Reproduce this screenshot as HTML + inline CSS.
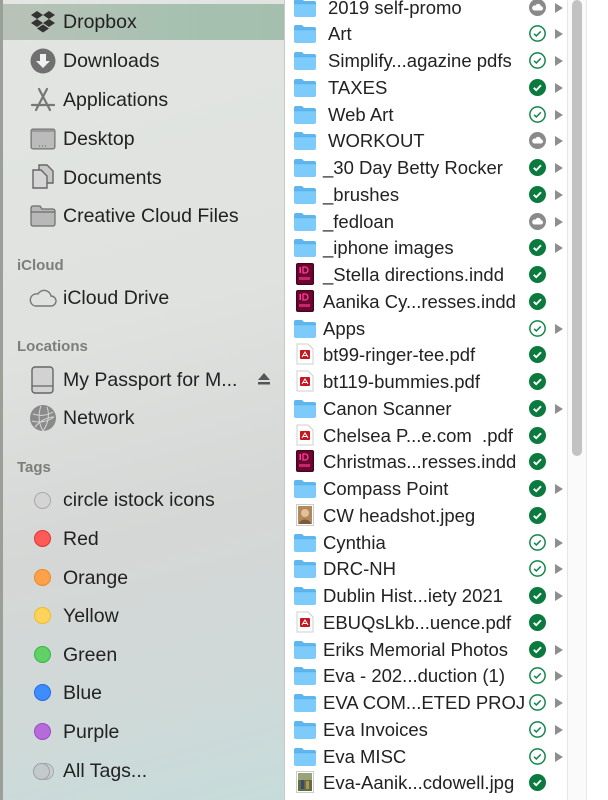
<!DOCTYPE html>
<html><head><meta charset="utf-8">
<style>
*{margin:0;padding:0;box-sizing:border-box}
body{width:608px;height:800px;overflow:hidden;font-family:"Liberation Sans",sans-serif;background:#fff;position:relative}
#side{position:absolute;left:0;top:0;width:285px;height:800px;background:linear-gradient(165deg,#e2e5e2 0%,#dfe2df 40%,#d5d7d6 65%,#cfd9d8 85%,#c6dcdb 100%);border-right:1px solid #c8c8c8}
#strip{position:absolute;left:0;top:0;width:3px;height:800px;background:#9a9f98}
#sel{position:absolute;left:3px;top:4px;width:281px;height:36px;background:linear-gradient(90deg,#b9c2b8,#a7c1b1 60%,#a5bfae)}
.si{position:absolute;left:63px;font-size:19.5px;color:#222;line-height:22px}
.sh{position:absolute;left:17px;font-size:15px;color:#7b7e7b;font-weight:bold}
.ic{position:absolute}
.dot{position:absolute;left:34px;width:17px;height:17px;border-radius:50%}
#main{position:absolute;left:286px;top:0;width:281px;height:800px;background:#fff}
.r{position:absolute;left:286px;width:281px;height:27px}
.t{position:absolute;left:37px;top:3px;font-size:18.5px;color:#222;white-space:nowrap;line-height:21px}
.w .t{left:42px}
.r svg{position:absolute}
.f{left:7px;top:4px}
.o{left:10px;top:2px}
.s{left:243px;top:5px}
.a{left:268px;top:8px}
#sb{position:absolute;left:567px;top:0;width:20px;height:800px;background:#fafafa;border-left:1px solid #e6e6e6;border-right:1px solid #e6e6e6}
#thumb{position:absolute;left:572px;top:0;width:10px;height:456px;border-radius:5px;background:#c2c2c2}
</style></head><body>
<svg width="0" height="0" style="position:absolute">
<defs>
<symbol id="fold" viewBox="0 0 24 20"><path d="M1 3a2 2 0 0 1 2-2h6l2 2h10a2 2 0 0 1 2 2v1H1z" fill="#5fb6ee"/><rect x="1" y="5" width="22" height="14" rx="2" fill="#7ccbfb"/><rect x="1" y="5" width="22" height="1.2" fill="#5ab2ea"/></symbol>
<symbol id="chkf" viewBox="0 0 16 16"><circle cx="8" cy="8" r="8" fill="#0a7a3e"/><path d="M4.5 8.3l2.3 2.2 4.5-4.6" stroke="#fff" stroke-width="1.8" fill="none"/></symbol>
<symbol id="chko" viewBox="0 0 16 16"><circle cx="8" cy="8" r="7.2" fill="none" stroke="#13864a" stroke-width="1.4"/><path d="M4.8 8.3l2.1 2 4.2-4.3" stroke="#13864a" stroke-width="1.4" fill="none"/></symbol>
<symbol id="cld" viewBox="0 0 16 16"><circle cx="8" cy="8" r="8" fill="#8a8a8a"/><path d="M4.6 10.8h6.6a2 2 0 0 0 0-4 2.6 2.6 0 0 0-5-.6 2.3 2.3 0 0 0-1.6 4.6z" fill="#fff"/></symbol>
<symbol id="arr" viewBox="0 0 10 12"><path d="M1 1l8 5-8 5z" fill="#8e8e8e"/></symbol>
<symbol id="id" viewBox="0 0 18 22"><rect width="18" height="22" rx="2" fill="#49021f"/><rect x="1.3" y="1.3" width="15.4" height="19.4" rx="1" fill="#6b0730"/><rect x="3.5" y="4" width="1.5" height="6" fill="#ff3f93"/><path d="M7 4h2a3 3 0 0 1 0 6H7z" fill="none" stroke="#ff3f93" stroke-width="1.3"/><rect x="3" y="14" width="11" height="3" fill="#ff3f93" opacity=".6"/></symbol>
<symbol id="pdf" viewBox="0 0 18 22"><path d="M1 1h11l5 5v15H1z" fill="#fff" stroke="#cfcfcf"/><rect x="4" y="7" width="10" height="9" rx="1" fill="#c6171e"/><path d="M6 14l3-5 3 5M7 12.5h4" stroke="#fff" stroke-width="1" fill="none"/></symbol>
<symbol id="img" viewBox="0 0 18 22"><rect x=".5" y=".5" width="17" height="21" fill="#fff" stroke="#ccc"/><rect x="2" y="2" width="14" height="18" fill="#b08a5a"/><circle cx="9" cy="9" r="4" fill="#e4c09b"/><path d="M3 20c1-6 11-6 12 0z" fill="#7a5a3a"/></symbol>
<symbol id="img2" viewBox="0 0 18 22"><rect x=".5" y=".5" width="17" height="21" fill="#fff" stroke="#ccc"/><rect x="2" y="2" width="14" height="18" fill="#5f7040"/><rect x="2" y="2" width="14" height="7" fill="#9aa27a"/><rect x="5" y="9" width="3" height="9" fill="#3a4a6a"/><rect x="10" y="10" width="3" height="8" fill="#c0905a"/></symbol>
</defs></svg>

<div id="side">
<div id="strip"></div>
<div id="sel"></div>
<svg class="ic" style="left:30px;top:10px" width="26" height="24" viewBox="0 0 26 24"><path d="M7 1l6 4-6 4-6-4zM19 1l6 4-6 4-6-4zM1 13l6-4 6 4-6 4zM25 13l-6-4-6 4 6 4zM7 18.5l6-4 6 4-6 4z" fill="#333"/></svg>
<div class="si" style="top:11px">Dropbox</div>
<svg class="ic" style="left:30px;top:48px" width="26" height="26" viewBox="0 0 26 26"><circle cx="13" cy="13" r="12.5" fill="#707070"/><path d="M10 6h6v7h4l-7 7-7-7h4z" fill="#f0f0f0"/></svg>
<div class="si" style="top:50px">Downloads</div>
<svg class="ic" style="left:30px;top:87px" width="26" height="26" viewBox="0 0 26 26"><path d="M9 2l11 21M17 2L6 23M2 18h22" stroke="#777" stroke-width="2.2" fill="none" stroke-linecap="round"/></svg>
<div class="si" style="top:89px">Applications</div>
<svg class="ic" style="left:30px;top:128px" width="26" height="22" viewBox="0 0 26 22"><rect x="1" y="1" width="24" height="20" rx="2" fill="#9a9a9a" stroke="#6f6f6f"/><rect x="2" y="4" width="22" height="16" fill="#bbb"/><path d="M9 18h1M12 18h1M15 18h1" stroke="#666"/></svg>
<div class="si" style="top:128px">Desktop</div>
<svg class="ic" style="left:31px;top:164px" width="24" height="26" viewBox="0 0 24 26"><path d="M8 1h8l6 6v12H8z" fill="#c8c8c8" stroke="#666" stroke-width="1.4"/><path d="M2 6h8l6 6v12H2z" fill="#d6d6d6" stroke="#666" stroke-width="1.4"/></svg>
<div class="si" style="top:167px">Documents</div>
<svg class="ic" style="left:30px;top:205px" width="26" height="22" viewBox="0 0 26 22"><path d="M1 3a2 2 0 0 1 2-2h7l2 3h11a2 2 0 0 1 2 2v13a2 2 0 0 1-2 2H3a2 2 0 0 1-2-2z" fill="#b8b8b8" stroke="#6b6b6b" stroke-width="1.2"/><path d="M1 7h24" stroke="#6b6b6b" stroke-width="1.2"/></svg>
<div class="si" style="top:205px">Creative Cloud Files</div>
<div class="sh" style="top:257px">iCloud</div>
<svg class="ic" style="left:29px;top:288px" width="28" height="20" viewBox="0 0 28 20"><path d="M6 18h16a5 5 0 0 0 0-10 7 7 0 0 0-13-2A6 6 0 0 0 6 18z" fill="none" stroke="#777" stroke-width="1.4"/></svg>
<div class="si" style="top:287px">iCloud Drive</div>
<div class="sh" style="top:338px">Locations</div>
<svg class="ic" style="left:31px;top:366px" width="24" height="28" viewBox="0 0 24 28"><rect x="1" y="1" width="21" height="26" rx="3" fill="#d2d2d2" stroke="#666" stroke-width="1.4"/><path d="M1 20h21" stroke="#666" stroke-width="1.2"/></svg>
<div class="si" style="top:369px">My Passport for M...</div>
<svg class="ic" style="left:257px;top:372px" width="14" height="14" viewBox="0 0 14 14"><path d="M7 1l6 7H1z" fill="#555"/><rect x="1" y="10" width="12" height="2.5" fill="#555"/></svg>
<svg class="ic" style="left:29px;top:404px" width="28" height="28" viewBox="0 0 28 28"><circle cx="14" cy="14" r="13" fill="#8a8a8a"/><path d="M4 10c6 2 14 2 20-2M3 17c7 2 15 1 22-4M12 2c-3 8-3 16 2 25M18 3c3 8 1 17-4 24M6 23c5-6 12-10 19-10" stroke="#d6d6d6" stroke-width="1" fill="none"/></svg>
<div class="si" style="top:407px">Network</div>
<div class="sh" style="top:459px">Tags</div>
<div class="dot" style="top:492px;background:#d4d4d4;border:1px solid #a8a8a8"></div>
<div class="si" style="top:489px">circle istock icons</div>
<div class="dot" style="top:530px;background:#ff5a57;border:1px solid #e0332f"></div>
<div class="si" style="top:528px">Red</div>
<div class="dot" style="top:569px;background:#ffa04a;border:1px solid #ec8a1a"></div>
<div class="si" style="top:567px">Orange</div>
<div class="dot" style="top:607px;background:#fdd35b;border:1px solid #f2bb1e"></div>
<div class="si" style="top:605px">Yellow</div>
<div class="dot" style="top:646px;background:#5fd167;border:1px solid #37b541"></div>
<div class="si" style="top:644px">Green</div>
<div class="dot" style="top:684px;background:#3f8cff;border:1px solid #1d6ee6"></div>
<div class="si" style="top:682px">Blue</div>
<div class="dot" style="top:723px;background:#b56bd9;border:1px solid #9a4ac2"></div>
<div class="si" style="top:721px">Purple</div>
<div class="dot" style="top:763px;left:37px;background:#c9cfcf;border:1px solid #a8a8a8"></div>
<div class="dot" style="top:763px;left:33px;background:#c2cacb;border:1px solid #a0a0a0"></div>
<div class="si" style="top:760px">All Tags...</div>
</div>

<div id="main"></div>
<div id="sb"></div>
<div id="thumb"></div>

<div class="r w" style="top:-6px"><svg class="f" width="24" height="20"><use href="#fold"/></svg><div class="t">2019 self-promo</div><svg class="s" width="17" height="17"><use href="#cld"/></svg><svg class="a" width="10" height="12"><use href="#arr"/></svg></div>
<div class="r w" style="top:20px"><svg class="f" width="24" height="20"><use href="#fold"/></svg><div class="t">Art</div><svg class="s" width="17" height="17"><use href="#chko"/></svg><svg class="a" width="10" height="12"><use href="#arr"/></svg></div>
<div class="r w" style="top:47px"><svg class="f" width="24" height="20"><use href="#fold"/></svg><div class="t">Simplify...agazine pdfs</div><svg class="s" width="17" height="17"><use href="#chko"/></svg><svg class="a" width="10" height="12"><use href="#arr"/></svg></div>
<div class="r w" style="top:74px"><svg class="f" width="24" height="20"><use href="#fold"/></svg><div class="t">TAXES</div><svg class="s" width="17" height="17"><use href="#chkf"/></svg><svg class="a" width="10" height="12"><use href="#arr"/></svg></div>
<div class="r w" style="top:101px"><svg class="f" width="24" height="20"><use href="#fold"/></svg><div class="t">Web Art</div><svg class="s" width="17" height="17"><use href="#chko"/></svg><svg class="a" width="10" height="12"><use href="#arr"/></svg></div>
<div class="r w" style="top:127px"><svg class="f" width="24" height="20"><use href="#fold"/></svg><div class="t">WORKOUT</div><svg class="s" width="17" height="17"><use href="#cld"/></svg><svg class="a" width="10" height="12"><use href="#arr"/></svg></div>
<div class="r" style="top:154px"><svg class="f" width="24" height="20"><use href="#fold"/></svg><div class="t">_30 Day Betty Rocker</div><svg class="s" width="17" height="17"><use href="#chkf"/></svg><svg class="a" width="10" height="12"><use href="#arr"/></svg></div>
<div class="r" style="top:181px"><svg class="f" width="24" height="20"><use href="#fold"/></svg><div class="t">_brushes</div><svg class="s" width="17" height="17"><use href="#chkf"/></svg><svg class="a" width="10" height="12"><use href="#arr"/></svg></div>
<div class="r" style="top:208px"><svg class="f" width="24" height="20"><use href="#fold"/></svg><div class="t">_fedloan</div><svg class="s" width="17" height="17"><use href="#cld"/></svg><svg class="a" width="10" height="12"><use href="#arr"/></svg></div>
<div class="r" style="top:234px"><svg class="f" width="24" height="20"><use href="#fold"/></svg><div class="t">_iphone images</div><svg class="s" width="17" height="17"><use href="#chkf"/></svg><svg class="a" width="10" height="12"><use href="#arr"/></svg></div>
<div class="r" style="top:261px"><svg class="o" width="18" height="22"><use href="#id"/></svg><div class="t">_Stella directions.indd</div><svg class="s" width="17" height="17"><use href="#chkf"/></svg></div>
<div class="r" style="top:288px"><svg class="o" width="18" height="22"><use href="#id"/></svg><div class="t">Aanika Cy...resses.indd</div><svg class="s" width="17" height="17"><use href="#chkf"/></svg></div>
<div class="r" style="top:315px"><svg class="f" width="24" height="20"><use href="#fold"/></svg><div class="t">Apps</div><svg class="s" width="17" height="17"><use href="#chko"/></svg><svg class="a" width="10" height="12"><use href="#arr"/></svg></div>
<div class="r" style="top:341px"><svg class="o" width="18" height="22"><use href="#pdf"/></svg><div class="t">bt99-ringer-tee.pdf</div><svg class="s" width="17" height="17"><use href="#chkf"/></svg></div>
<div class="r" style="top:368px"><svg class="o" width="18" height="22"><use href="#pdf"/></svg><div class="t">bt119-bummies.pdf</div><svg class="s" width="17" height="17"><use href="#chkf"/></svg></div>
<div class="r" style="top:395px"><svg class="f" width="24" height="20"><use href="#fold"/></svg><div class="t">Canon Scanner</div><svg class="s" width="17" height="17"><use href="#chkf"/></svg><svg class="a" width="10" height="12"><use href="#arr"/></svg></div>
<div class="r" style="top:422px"><svg class="o" width="18" height="22"><use href="#pdf"/></svg><div class="t">Chelsea P...e.com &nbsp;.pdf</div><svg class="s" width="17" height="17"><use href="#chkf"/></svg></div>
<div class="r" style="top:448px"><svg class="o" width="18" height="22"><use href="#id"/></svg><div class="t">Christmas...resses.indd</div><svg class="s" width="17" height="17"><use href="#chkf"/></svg></div>
<div class="r" style="top:475px"><svg class="f" width="24" height="20"><use href="#fold"/></svg><div class="t">Compass Point</div><svg class="s" width="17" height="17"><use href="#chkf"/></svg><svg class="a" width="10" height="12"><use href="#arr"/></svg></div>
<div class="r" style="top:502px"><svg class="o" width="18" height="22"><use href="#img"/></svg><div class="t">CW headshot.jpeg</div><svg class="s" width="17" height="17"><use href="#chkf"/></svg></div>
<div class="r" style="top:529px"><svg class="f" width="24" height="20"><use href="#fold"/></svg><div class="t">Cynthia</div><svg class="s" width="17" height="17"><use href="#chko"/></svg><svg class="a" width="10" height="12"><use href="#arr"/></svg></div>
<div class="r" style="top:555px"><svg class="f" width="24" height="20"><use href="#fold"/></svg><div class="t">DRC-NH</div><svg class="s" width="17" height="17"><use href="#chko"/></svg><svg class="a" width="10" height="12"><use href="#arr"/></svg></div>
<div class="r" style="top:582px"><svg class="f" width="24" height="20"><use href="#fold"/></svg><div class="t">Dublin Hist...iety 2021</div><svg class="s" width="17" height="17"><use href="#chkf"/></svg><svg class="a" width="10" height="12"><use href="#arr"/></svg></div>
<div class="r" style="top:609px"><svg class="o" width="18" height="22"><use href="#pdf"/></svg><div class="t">EBUQsLkb...uence.pdf</div><svg class="s" width="17" height="17"><use href="#chkf"/></svg></div>
<div class="r" style="top:636px"><svg class="f" width="24" height="20"><use href="#fold"/></svg><div class="t">Eriks Memorial Photos</div><svg class="s" width="17" height="17"><use href="#chkf"/></svg><svg class="a" width="10" height="12"><use href="#arr"/></svg></div>
<div class="r" style="top:662px"><svg class="f" width="24" height="20"><use href="#fold"/></svg><div class="t">Eva - 202...duction (1)</div><svg class="s" width="17" height="17"><use href="#chko"/></svg><svg class="a" width="10" height="12"><use href="#arr"/></svg></div>
<div class="r" style="top:689px"><svg class="f" width="24" height="20"><use href="#fold"/></svg><div class="t">EVA COM...ETED PROJ</div><svg class="s" width="17" height="17"><use href="#chko"/></svg><svg class="a" width="10" height="12"><use href="#arr"/></svg></div>
<div class="r" style="top:716px"><svg class="f" width="24" height="20"><use href="#fold"/></svg><div class="t">Eva Invoices</div><svg class="s" width="17" height="17"><use href="#chko"/></svg><svg class="a" width="10" height="12"><use href="#arr"/></svg></div>
<div class="r" style="top:743px"><svg class="f" width="24" height="20"><use href="#fold"/></svg><div class="t">Eva MISC</div><svg class="s" width="17" height="17"><use href="#chko"/></svg><svg class="a" width="10" height="12"><use href="#arr"/></svg></div>
<div class="r" style="top:769px"><svg class="o" width="18" height="22"><use href="#img2"/></svg><div class="t">Eva-Aanik...cdowell.jpg</div><svg class="s" width="17" height="17"><use href="#chkf"/></svg></div>
</body></html>
